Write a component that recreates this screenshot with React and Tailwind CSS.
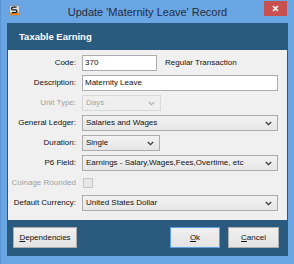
import React from "react";

const font = { fontFamily: '"Liberation Sans", Arial, sans-serif' };

function Chevron({ color = "#333" }) {
  return (
    <svg width="7" height="5" viewBox="0 0 7 5" className="shrink-0">
      <path d="M0.8 1 L3.5 3.6 L6.2 1" fill="none" stroke={color} strokeWidth="1.3" />
    </svg>
  );
}

function Select({ value, w, disabled }) {
  return (
    <div
      className={`h-[16px] flex items-center justify-between pl-[3px] pr-[5px] border ${
        disabled
          ? "border-[#d9d9d9] bg-[#efefef] text-[#a3a3a3]"
          : "border-[#acacac] bg-gradient-to-b from-[#f2f2f2] to-[#e6e6e6] text-[#111]"
      }`}
      style={{ width: w }}
    >
      <span className="whitespace-nowrap leading-none">{value}</span>
      <Chevron color={disabled ? "#b5b5b5" : "#3a3a3a"} />
    </div>
  );
}

function TextBox({ value, w }) {
  return (
    <div
      className="h-[16px] flex items-center pl-[2px] border border-[#abadb3] bg-white text-[#111]"
      style={{ width: w }}
    >
      <span className="leading-none">{value}</span>
    </div>
  );
}

function Row({ label, disabled, children }) {
  return (
    <div className="h-[20px] flex items-start">
      <div
        className={`w-[68px] h-[16px] flex items-center justify-end whitespace-nowrap ${
          disabled ? "text-[#a0a0a0]" : "text-[#111]"
        }`}
      >
        {label}
      </div>
      <div className="ml-[6px] flex items-center">{children}</div>
    </div>
  );
}

function Button({ label, w, def }) {
  return (
    <div
      className={`h-[21px] flex items-center justify-center bg-gradient-to-b from-[#f0f0f0] to-[#e3e3e3] border ${
        def ? "border-[#5fa0e2]" : "border-[#adadad]"
      } text-[#111] text-[8px]`}
      style={{ width: w }}
    >
      <span>
        <span className="underline">{label[0]}</span>
        {label.slice(1)}
      </span>
    </div>
  );
}

export default function App() {
  return (
    <div
      className="w-[294px] h-[264px] bg-[#6ba6e4] border-l border-[#5a94d4] flex flex-col text-[8px]"
      style={font}
    >
      {/* title bar */}
      <div className="h-[23px] relative flex items-center justify-center shrink-0">
        <div className="absolute left-[8px] top-[5px]">
          <svg width="11" height="11" viewBox="0 0 11 11">
            <rect x="0.5" y="0.5" width="10" height="10" rx="1.5" fill="#d8dde3" stroke="#8a96a3" />
            <rect x="1" y="7.5" width="9" height="2.5" fill="#e8892b" />
            <path d="M7.5 2.2 H4 Q2.6 2.2 2.6 3.5 Q2.6 4.8 4 4.8 H6.5 Q8 4.8 8 6.2 Q8 7.6 6.5 7.6 H3" fill="none" stroke="#1a1a1a" strokeWidth="1.3" />
          </svg>
        </div>
        <span className="text-[11px] text-[#1f2d3d] mt-[1px]">Update 'Maternity Leave' Record</span>
        <div className="absolute right-[7px] top-[1px] w-[23px] h-[15px] bg-[#c75050] flex items-center justify-center">
          <svg width="7" height="7" viewBox="0 0 7 7">
            <path d="M1 1 L6 6 M6 1 L1 6" stroke="#fff" strokeWidth="1.6" />
          </svg>
        </div>
      </div>

      {/* navy panel */}
      <div className="mx-[6px] h-[233px] bg-[#2a5a7e] flex flex-col shrink-0">
        <div className="h-[27px] flex items-center pl-[12px] pt-[2px] shrink-0">
          <span className="text-white font-bold text-[9.5px]">Taxable Earning</span>
        </div>
        <div className="mx-[1px] h-[170px] bg-[#f0f0f0] pt-[5px] flex flex-col shrink-0">
          <Row label="Code:">
            <TextBox value="370" w={75} />
            <span className="ml-[8px] text-[#111] whitespace-nowrap">Regular Transaction</span>
          </Row>
          <Row label="Description:">
            <TextBox value="Maternity Leave" w={196} />
          </Row>
          <Row label="Unit Type:" disabled>
            <Select value="Days" w={79} disabled />
          </Row>
          <Row label="General Ledger:">
            <Select value="Salaries and Wages" w={196} />
          </Row>
          <Row label="Duration:">
            <Select value="Single" w={78} />
          </Row>
          <Row label="P6 Field:">
            <Select value="Earnings - Salary,Wages,Fees,Overtime, etc" w={196} />
          </Row>
          <Row label="Coinage Rounded" disabled>
            <div className="h-[16px] flex items-center">
              <div className="w-[10px] h-[10px] ml-[1px] border border-[#c6c6c6] bg-[#e8e8e8]" />
            </div>
          </Row>
          <Row label="Default Currency:">
            <Select value="United States Dollar" w={196} />
          </Row>
        </div>
        <div className="flex-1 flex items-center pl-[6px] pr-[9px] pb-[1px]">
          <Button label="Dependencies" w={64} />
          <div className="flex-1" />
          <Button label="Ok" w={50} def />
          <div className="w-[8px]" />
          <Button label="Cancel" w={51} />
        </div>
      </div>
    </div>
  );
}
